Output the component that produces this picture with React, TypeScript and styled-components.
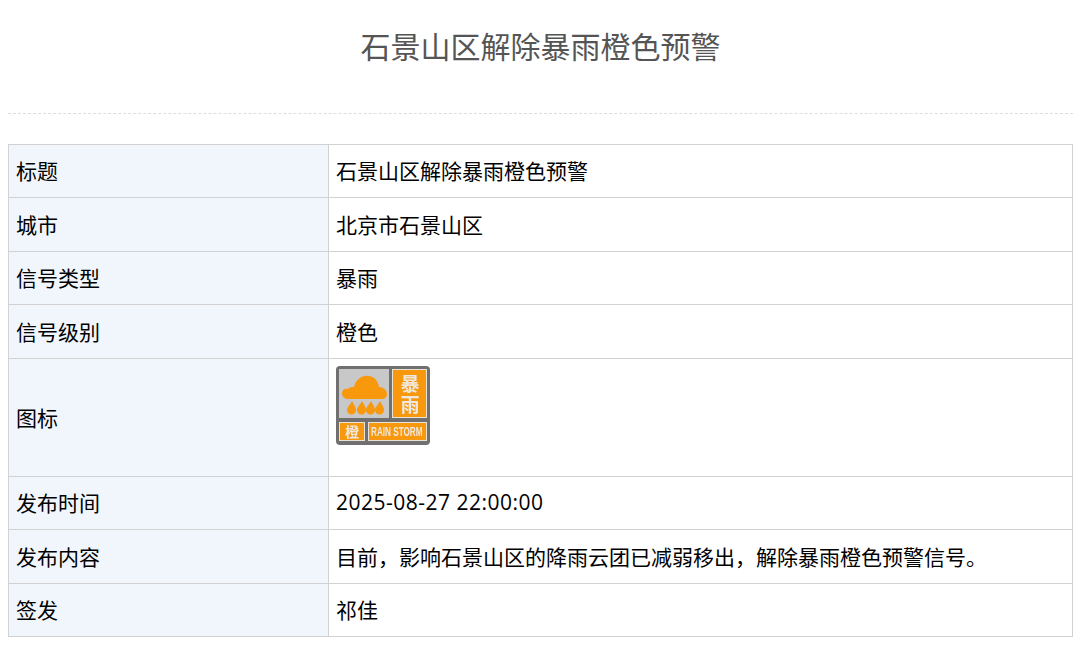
import React from "react";
import styled, { createGlobalStyle } from "styled-components";

const GlobalStyle = createGlobalStyle`
  html, body {
    margin: 0;
    padding: 0;
    background: #fff;
    font-family: "Liberation Sans", "Noto Sans CJK SC", sans-serif;
  }
`;

const Page = styled.div`
  padding: 0 10px 0 8px;
`;

const Title = styled.h1`
  margin: 0;
  height: 114px;
  box-sizing: border-box;
  padding-top: 27px;
  border-bottom: 1px dashed #ddd;
  font-size: 30px;
  line-height: 42px;
  font-weight: 400;
  text-align: center;
  color: #555;
`;

const InfoTable = styled.table`
  margin-top: 30px;
  width: 100%;
  border-collapse: collapse;
  table-layout: fixed;
  font-size: 21px;
  color: #000;
`;

const LabelCell = styled.td`
  width: 320px;
  box-sizing: border-box;
  padding: 6px 7px 8px;
  border: 1px solid #d2d2d2;
  background: #f1f6fd;
`;

const ValueCell = styled.td`
  box-sizing: border-box;
  padding: 6px 7px 8px;
  border: 1px solid #d2d2d2;
`;

const Row = styled.tr<{ $height: number }>`
  height: ${(p) => p.$height}px;
`;

const IconCell = styled(ValueCell)`
  padding-top: 7px;
  vertical-align: top;
`;

const DateText = styled.span`
  font-family: "Open Sans", sans-serif;
  letter-spacing: 0.5px;
`;

const IconSvg = styled.svg`
  display: block;
`;

const RainIcon = () => (
  <IconSvg width="94" height="79" viewBox="0 0 94 79">
    <defs>
      <filter id="soft" x="-5%" y="-5%" width="110%" height="110%">
        <feGaussianBlur stdDeviation="0.6" />
      </filter>
    </defs>
    <g filter="url(#soft)">
      <rect x="0" y="0" width="94" height="79" rx="4" fill="#6f6f6f" />
      <rect x="3" y="3" width="50" height="49" fill="#c8c8c8" />
      <rect x="56" y="3" width="35" height="49" fill="#e9e2d6" />
      <rect x="57" y="4" width="33" height="47" fill="#f7980f" />
      <rect x="3" y="56" width="26" height="19" fill="#e9e2d6" />
      <rect x="4" y="57" width="24" height="17" fill="#f7980f" />
      <rect x="32" y="56" width="59" height="19" fill="#e9e2d6" />
      <rect x="33" y="57" width="57" height="17" fill="#f7980f" />
      <path
        d="M6 27c0-3 3-5 6-4 2-2 4-2 6-2 2-8 8-12 15-11 6 1 9 5 10 11 4 0 8 3 8 7 0 3-2 5-5 5H13c-4 0-7-2-7-6z"
        fill="#f7980f"
      />
      <path
        d="M16 35c2 4 4 6 4 9a4.5 4.5 0 0 1-9 0c0-3 3-5 5-9zM26 35c2 4 4 6 4 9a4.5 4.5 0 0 1-9 0c0-3 3-5 5-9zM35 35c2 4 4 6 4 9a4.5 4.5 0 0 1-9 0c0-3 3-5 5-9zM44 35c2 4 4 6 4 9a4.5 4.5 0 0 1-9 0c0-3 3-5 5-9z"
        fill="#f7980f"
      />
      <text x="74" y="25" fontSize="19" fontWeight="700" textAnchor="middle" fill="#f0e8dc" fontFamily="Noto Sans CJK SC, sans-serif">
        暴
      </text>
      <text x="74" y="46" fontSize="19" fontWeight="700" textAnchor="middle" fill="#f0e8dc" fontFamily="Noto Sans CJK SC, sans-serif">
        雨
      </text>
      <text x="16" y="71" fontSize="14" fontWeight="700" textAnchor="middle" fill="#f0e8dc" fontFamily="Noto Sans CJK SC, sans-serif">
        橙
      </text>
      <text
        transform="translate(35 70) scale(0.68 1)"
        fontSize="12"
        fontWeight="700"
        fill="#f0e8dc"
        fontFamily="Liberation Sans, sans-serif"
      >
        RAIN STORM
      </text>
    </g>
  </IconSvg>
);

const rows: { label: string; height: number; value?: string; icon?: boolean; date?: boolean }[] = [
  { label: "标题", height: 53, value: "石景山区解除暴雨橙色预警" },
  { label: "城市", height: 54, value: "北京市石景山区" },
  { label: "信号类型", height: 53, value: "暴雨" },
  { label: "信号级别", height: 54, value: "橙色" },
  { label: "图标", height: 118, icon: true },
  { label: "发布时间", height: 53, value: "2025-08-27 22:00:00", date: true },
  { label: "发布内容", height: 54, value: "目前，影响石景山区的降雨云团已减弱移出，解除暴雨橙色预警信号。" },
  { label: "签发", height: 53, value: "祁佳" },
];

export default function App() {
  return (
    <Page>
      <GlobalStyle />
      <Title>石景山区解除暴雨橙色预警</Title>
      <InfoTable>
        <tbody>
          {rows.map((r) => (
            <Row key={r.label} $height={r.height}>
              <LabelCell>{r.label}</LabelCell>
              {r.icon ? (
                <IconCell>
                  <RainIcon />
                </IconCell>
              ) : (
                <ValueCell>{r.date ? <DateText>{r.value}</DateText> : r.value}</ValueCell>
              )}
            </Row>
          ))}
        </tbody>
      </InfoTable>
    </Page>
  );
}
